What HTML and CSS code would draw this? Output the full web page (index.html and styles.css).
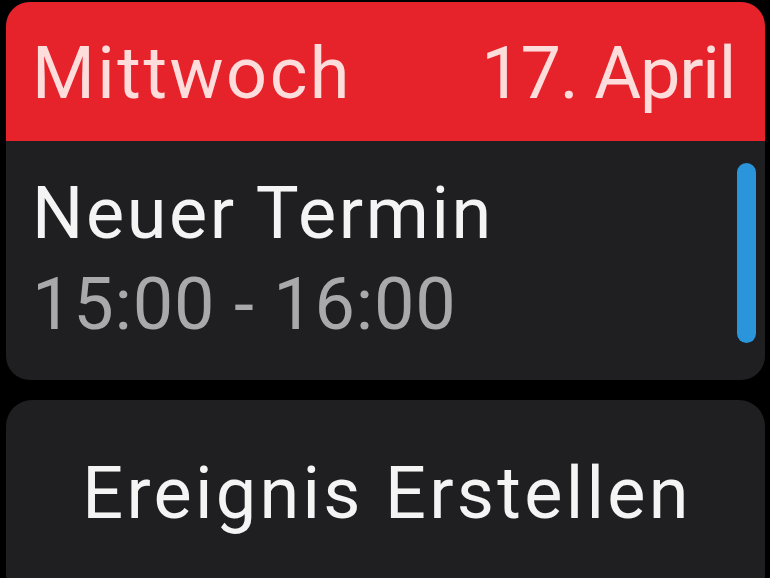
FILE: index.html
```html
<!DOCTYPE html>
<html lang="de">
<head>
<meta charset="utf-8">
<title>Kalender</title>
<link rel="stylesheet" href="styles.css">
</head>
<body>
<div class="screen">
  <section class="event-card">
    <header class="day-header">
      <span class="day-name">Mittwoch</span>
      <span class="day-date">17. April</span>
    </header>
    <div class="event-body">
      <div class="event-info">
        <div class="event-title">Neuer Termin</div>
        <div class="event-time">15:00 - 16:00</div>
      </div>
      <div class="calendar-bar"></div>
    </div>
  </section>
  <div class="create-button" role="button">Ereignis Erstellen</div>
</div>
</body>
</html>
```
FILE: styles.css
```css
html, body {
  margin: 0;
  padding: 0;
  background: #000;
  height: 100%;
  overflow: hidden;
}

.screen {
  display: flex;
  flex-direction: column;
  gap: 20px;
  padding: 2px 5px 0 6px;
  font-family: Roboto, "Liberation Sans", sans-serif;
}

.event-card {
  height: 378px;
  border-radius: 24px;
  overflow: hidden;
  background: #1f1f21;
  display: flex;
  flex-direction: column;
}

.day-header {
  height: 139px;
  box-sizing: border-box;
  background: #e6222a;
  display: flex;
  justify-content: space-between;
  align-items: flex-start;
  padding: 37px 30px 0 26px;
  color: #fddcdc;
  font-size: 72px;
  line-height: 70px;
}

.day-name {
  letter-spacing: 2.5px;
}

.day-date {
  letter-spacing: -1.2px;
}

.event-body {
  flex: 1;
  display: flex;
  padding: 22px 9px 37px 26px;
}

.event-info {
  flex: 1;
  display: flex;
  flex-direction: column;
  padding-top: 16px;
  gap: 21px;
  font-size: 72px;
  line-height: 70px;
}

.event-title {
  color: #f4f4f4;
  letter-spacing: 2.6px;
}

.event-time {
  color: #a9a9ac;
  letter-spacing: 0.8px;
}

.calendar-bar {
  width: 19px;
  border-radius: 10px;
  background: #2b95dc;
}

.create-button {
  height: 200px;
  box-sizing: border-box;
  border-radius: 26px;
  background: #1f1f21;
  color: #f4f4f4;
  font-size: 72px;
  line-height: 70px;
  letter-spacing: 3.3px;
  padding: 59px 0 0 3px;
  text-align: center;
}
```
